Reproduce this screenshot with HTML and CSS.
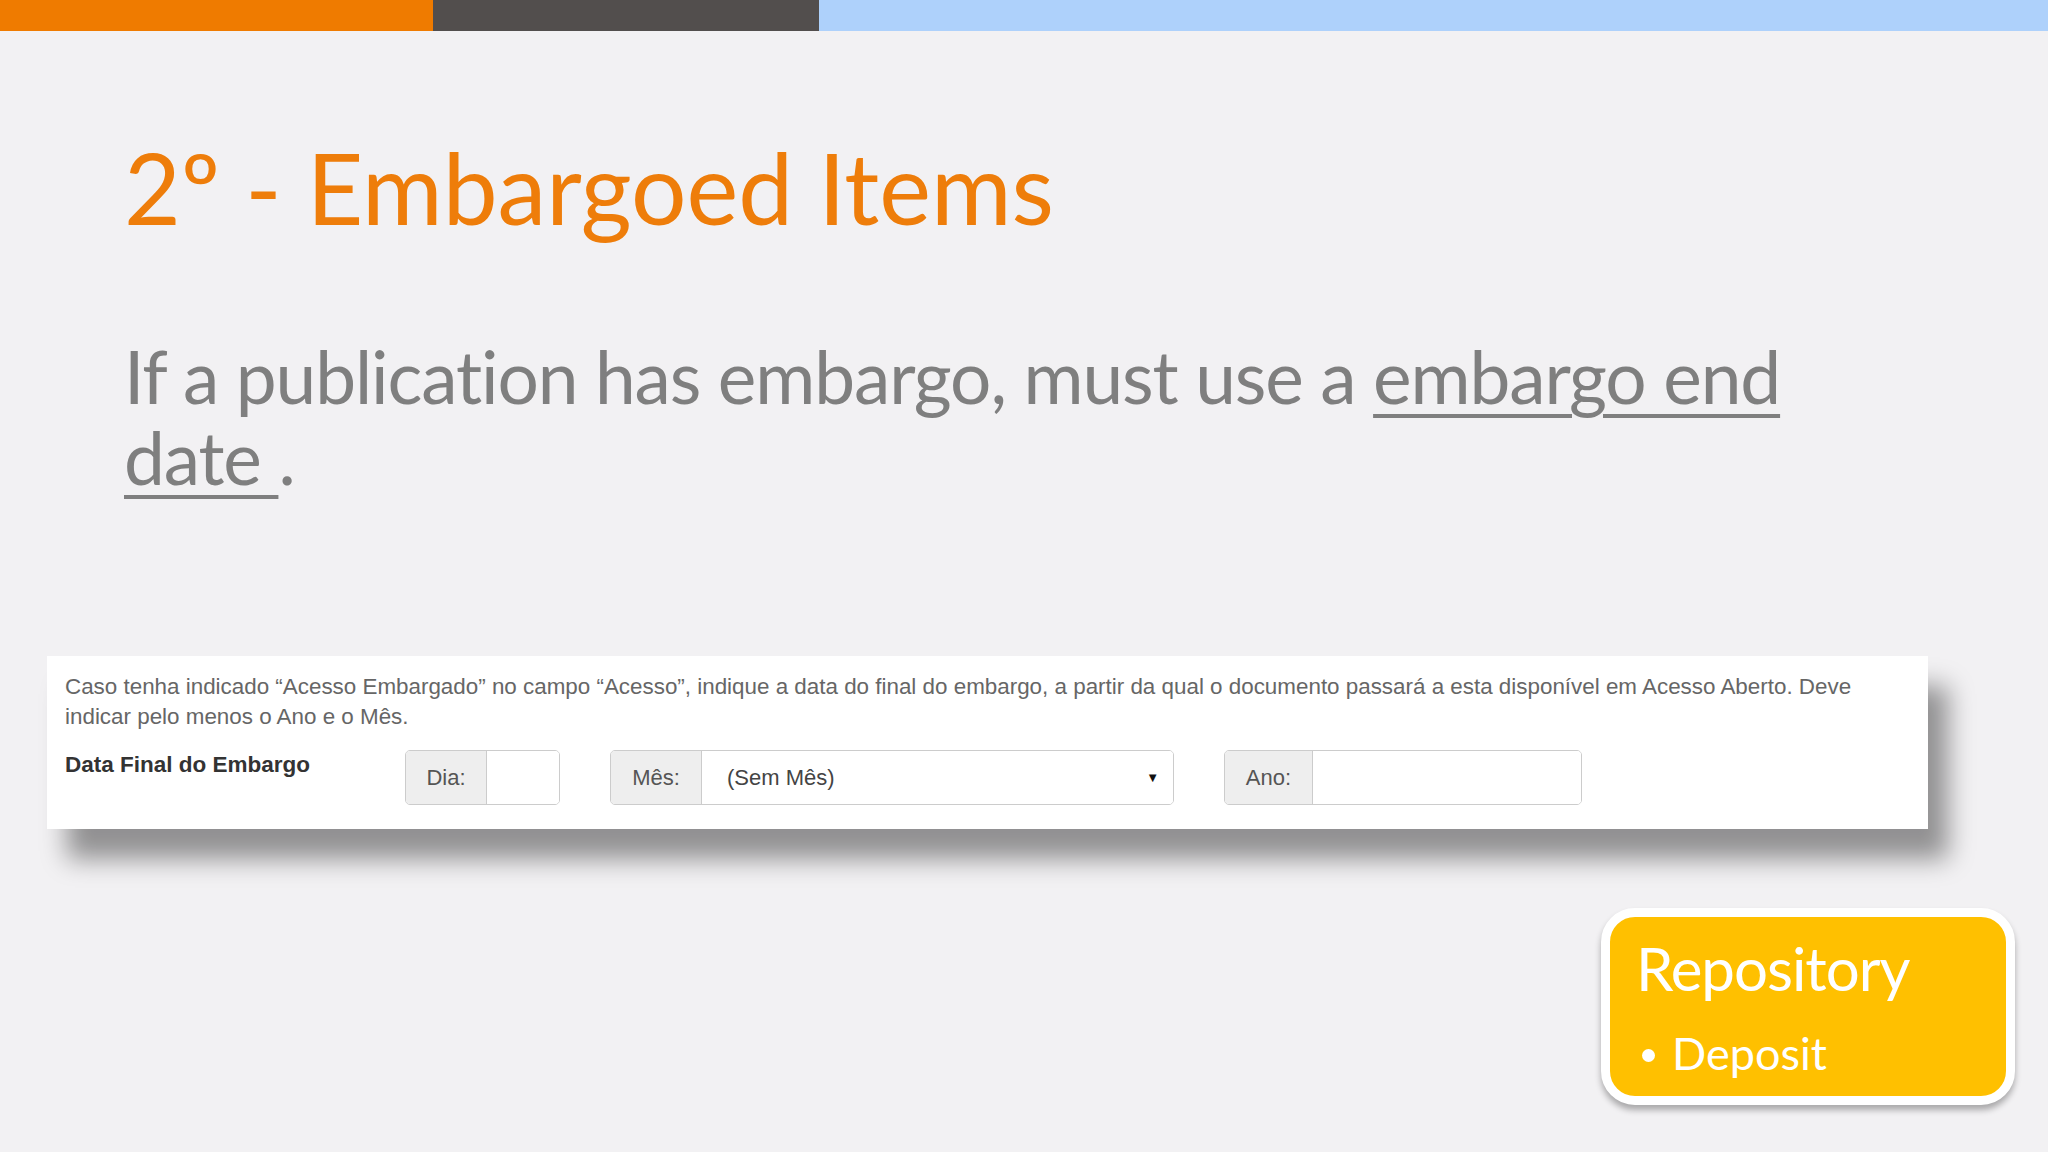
FILE: index.html
```html
<!DOCTYPE html>
<html lang="en">
  <head>
    <meta charset="UTF-8" />
    <title>2º - Embargoed Items</title>
    <link rel="stylesheet" href="styles.css">
  </head>
  <body>
    <div class="slide">
      <div class="topbar">
        <span class="seg seg-orange"></span>
        <span class="seg seg-dark"></span>
        <span class="seg seg-blue"></span>
      </div>

      <div class="content">
        <h1 class="title">2º - Embargoed Items</h1>
        <p class="lead">If a publication has embargo, must use a <u>embargo end date </u>.</p>

        <div class="form-card">
          <p class="help">Caso tenha indicado “Acesso Embargado” no campo “Acesso”, indique a data do final do embargo, a partir da qual o documento passará a esta disponível em Acesso Aberto. Deve indicar pelo menos o Ano e o Mês.</p>
          <div class="form-row">
            <label class="row-label">Data Final do Embargo</label>
            <div class="input-group group-day">
              <span class="addon">Dia:</span>
              <span class="field"></span>
            </div>
            <div class="input-group group-month">
              <span class="addon">Mês:</span>
              <span class="field select">(Sem Mês)<span class="caret">▼</span></span>
            </div>
            <div class="input-group group-year">
              <span class="addon">Ano:</span>
              <span class="field"></span>
            </div>
          </div>
        </div>

        <div class="tag-wrap">
          <div class="tag">
            <div class="tag-title">Repository</div>
            <div class="tag-item"><span class="dot"></span>Deposit</div>
          </div>
        </div>
      </div>
    </div>
  </body>
</html>
```

FILE: styles.css
```css
body {
  margin: 0;
  background: #f2f1f3;
  font-family: 'Lato', 'Open Sans', sans-serif;
  font-variant-ligatures: none;
}

.slide {
  width: 2048px;
  height: 1152px;
  overflow: hidden;
}

.topbar {
  display: flex;
  height: 31px;
}

.seg {
  display: block;
}

.seg-orange {
  width: 433px;
  background: #ef7b00;
}

.seg-dark {
  width: 386px;
  background: #524e4d;
}

.seg-blue {
  flex: 1;
  background: #aed1fb;
}

.content {
  display: flex;
  flex-direction: column;
}

.title {
  margin: 106px 0 0 124px;
  font-size: 98px;
  line-height: 100px;
  font-weight: 400;
  color: #ee7d0a;
}

.lead {
  margin: 99px 0 0 124px;
  width: 1720px;
  font-size: 73px;
  line-height: 81px;
  letter-spacing: -1.1px;
  color: #7f7f7f;
}

.lead u {
  text-decoration-thickness: 4px;
  text-underline-offset: 10px;
}

.form-card {
  margin: 158px 0 0 47px;
  width: 1881px;
  box-sizing: border-box;
  padding: 16px 18px 24px;
  background: #ffffff;
  box-shadow: 20px 30px 24px rgba(0, 0, 0, 0.4);
  font-family: 'Liberation Sans', Arial, sans-serif;
}

.help {
  margin: 0;
  font-size: 22.4px;
  line-height: 30px;
  color: #666;
}

.form-row {
  display: flex;
  margin-top: 18px;
  gap: 50px;
}

.row-label {
  width: 290px;
  font-size: 22.5px;
  line-height: 30px;
  font-weight: bold;
  color: #333;
}

.input-group {
  display: flex;
  height: 55px;
  box-sizing: border-box;
  border: 1px solid #ccc;
  border-radius: 5px;
  overflow: hidden;
  font-size: 22px;
  color: #555;
}

.addon {
  display: flex;
  align-items: center;
  justify-content: center;
  background: #eee;
  border-right: 1px solid #ccc;
}

.field {
  display: flex;
  align-items: center;
  flex: 1;
  background: #fff;
}

.group-day {
  width: 155px;
}

.group-day .addon {
  width: 80px;
}

.group-month {
  width: 564px;
}

.group-month .addon {
  width: 90px;
}

.group-year {
  width: 358px;
}

.group-year .addon {
  width: 87px;
}

.select {
  padding: 0 14px 0 25px;
  color: #444;
}

.caret {
  margin-left: auto;
  font-size: 13px;
  color: #111;
}

.tag-wrap {
  display: flex;
  justify-content: flex-end;
  margin: 79px 33px 0 0;
}

.tag {
  width: 414px;
  box-sizing: border-box;
  padding: 16px 20px 15px 26px;
  background: #ffc000;
  border: 9px solid #ffffff;
  border-radius: 34px;
  box-shadow: 0 5px 6px rgba(0, 0, 0, 0.3);
  color: #ffffff;
}

.tag-title {
  font-size: 60px;
  line-height: 70px;
  letter-spacing: -1px;
}

.tag-item {
  display: flex;
  align-items: center;
  margin-top: 22px;
  font-size: 45px;
  line-height: 56px;
}

.dot {
  width: 13px;
  height: 13px;
  border-radius: 50%;
  background: #ffffff;
  margin: 4px 17px 0 6px;
}
```
